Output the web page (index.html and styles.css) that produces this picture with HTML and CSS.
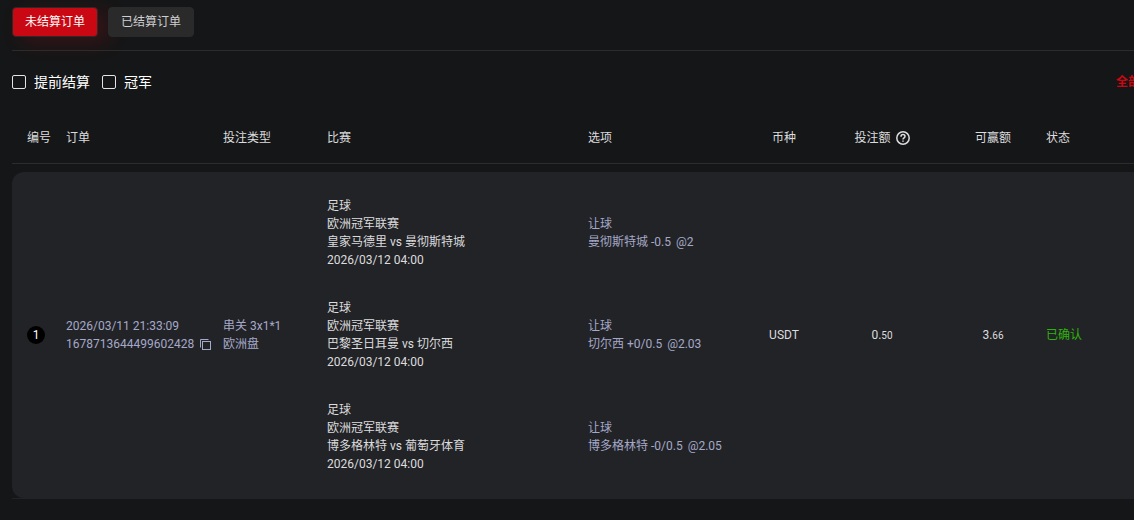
FILE: index.html
```html
<!DOCTYPE html>
<html lang="zh-CN">
<head>
  <meta charset="UTF-8">
  <meta name="viewport" content="width=device-width, initial-scale=1">
  <title>订单</title>
  <link rel="stylesheet" href="styles.css">
</head>
<body>
  <main class="page">
    <nav class="tabs">
      <button type="button" class="tab active">未结算订单</button>
      <button type="button" class="tab">已结算订单</button>
    </nav>

    <div class="filters">
      <label class="check"><input type="checkbox"> 提前结算</label>
      <label class="check"><input type="checkbox"> 冠军</label>
      <a href="#" class="all">全部</a>
    </div>

    <div class="orders-wrap">
      <table class="orders">
        <colgroup>
          <col class="col-no">
          <col class="col-order">
          <col class="col-type">
          <col class="col-match">
          <col class="col-pick">
          <col class="col-currency">
          <col class="col-stake">
          <col class="col-win">
          <col class="col-status">
        </colgroup>
        <thead>
          <tr>
            <th>编号</th>
            <th>订单</th>
            <th>投注类型</th>
            <th>比赛</th>
            <th>选项</th>
            <th class="center">币种</th>
            <th class="center">
              <span class="with-icon">投注额
                <svg class="help" viewBox="0 0 14 14" aria-hidden="true">
                  <circle cx="7" cy="7" r="6.2"/>
                  <path d="M5 5.7C5 4.4 5.8 3.6 7 3.6s2 .8 2 1.9C9 6.8 7 6.9 7 8.5M7 9.5v1.3"/>
                </svg>
              </span>
            </th>
            <th class="center">可赢额</th>
            <th>状态</th>
          </tr>
        </thead>
        <tbody>
          <tr>
            <td><span class="badge">1</span></td>
            <td class="muted">
              <div>2026/03/11 21:33:09</div>
              <div class="with-icon">1678713644499602428
                <button type="button" class="copy" aria-label="复制">
                  <svg viewBox="0 0 12 12" aria-hidden="true">
                    <path d="M1.5 9.5v-8h8"/>
                    <rect x="3.5" y="3.5" width="8" height="8"/>
                  </svg>
                </button>
              </div>
            </td>
            <td class="muted">
              <div>串关 3x1*1</div>
              <div>欧洲盘</div>
            </td>
            <td>
              <div class="leg">
                <div>足球</div>
                <div>欧洲冠军联赛</div>
                <div>皇家马德里 vs 曼彻斯特城</div>
                <div>2026/03/12 04:00</div>
              </div>
              <div class="leg">
                <div>足球</div>
                <div>欧洲冠军联赛</div>
                <div>巴黎圣日耳曼 vs 切尔西</div>
                <div>2026/03/12 04:00</div>
              </div>
              <div class="leg">
                <div>足球</div>
                <div>欧洲冠军联赛</div>
                <div>博多格林特 vs 葡萄牙体育</div>
                <div>2026/03/12 04:00</div>
              </div>
            </td>
            <td class="muted">
              <div class="leg">
                <div>让球</div>
                <div class="pick"><span>曼彻斯特城 -0.5</span><span>@2</span></div>
              </div>
              <div class="leg">
                <div>让球</div>
                <div class="pick"><span>切尔西 +0/0.5</span><span>@2.03</span></div>
              </div>
              <div class="leg">
                <div>让球</div>
                <div class="pick"><span>博多格林特 -0/0.5</span><span>@2.05</span></div>
              </div>
            </td>
            <td class="center">USDT</td>
            <td class="center">0.<small>50</small></td>
            <td class="center">3.<small>66</small></td>
            <td class="confirmed">已确认</td>
          </tr>
        </tbody>
      </table>
    </div>
  </main>
</body>
</html>
```
FILE: styles.css
```css
:root {
  --bg: #151617;
  --card: #222326;
  --line: #2b2c2e;
  --text: #dcdcde;
  --muted: #a5a9c9;
  --red: #c90813;
  --green: #2fb40c;
}

* {
  box-sizing: border-box;
}

body {
  margin: 0;
  background: var(--bg);
  color: var(--text);
  font-family: Roboto, "Noto Sans CJK SC", sans-serif;
  font-size: 12px;
  line-height: 18px;
  overflow-x: hidden;
}

button {
  font: inherit;
  cursor: pointer;
}

/* the list runs past the right side of the window */
.page {
  margin-right: -24px;
  padding: 7px 0 20px 12px;
}

.tabs {
  display: flex;
  gap: 10px;
  padding-bottom: 13px;
  border-bottom: 1px solid var(--line);
}

.tab {
  height: 30px;
  padding: 0 12px;
  border: 1px solid #2a2a2a;
  border-radius: 4px;
  background: #2a2a2a;
  color: #cfcfd2;
}

.tab.active {
  background: var(--red);
  color: #fff;
  box-shadow: 10px 5px 20px rgba(201, 8, 19, 0.2);
}

.filters {
  display: flex;
  align-items: center;
  gap: 12px;
  padding: 21px 18px 22px 0;
}

.check {
  display: flex;
  align-items: center;
  gap: 8px;
  color: #fff;
  font-size: 14px;
  line-height: 20px;
}

.check input {
  appearance: none;
  width: 14px;
  height: 14px;
  margin: 0;
  border: 1px solid #e4e4e4;
  border-radius: 2px;
}

.check input:checked {
  background: var(--red);
}

.all {
  margin-left: auto;
  color: var(--red);
  font-weight: 700;
  text-decoration: none;
}

.orders-wrap {
  border-bottom: 1px solid var(--card);
}

.orders {
  width: 100%;
  table-layout: fixed;
  border-spacing: 0;
}

.col-no { width: 46px; }
.col-order { width: 157px; }
.col-type { width: 104px; }
.col-match { width: 261px; }
.col-pick { width: 172px; }
.col-currency { width: 64px; }
.col-stake { width: 132px; }
.col-win { width: 90px; }

.orders th,
.orders td {
  padding: 0 0 0 8px;
  text-align: left;
  white-space: nowrap;
}

.orders th:first-child,
.orders td:first-child {
  padding-left: 15px;
}

.orders .center {
  padding-left: 0;
  text-align: center;
}

.orders th {
  height: 50px;
  padding-bottom: 2px;
  border-bottom: 1px solid var(--line);
  font-weight: 400;
}

/* gap between the header and the first card */
.orders tbody::before {
  content: "";
  display: block;
  height: 8px;
}

.orders td {
  padding-top: 10px;
  padding-bottom: 10px;
  background: var(--card);
}

.orders td:first-child {
  border-radius: 12px 0 0 12px;
}

.orders td:last-child {
  border-radius: 0 12px 12px 0;
}

.orders .muted {
  color: var(--muted);
}

.orders .confirmed {
  color: var(--green);
}

.orders small {
  font-size: 10px;
}

.badge {
  display: block;
  width: 18px;
  height: 18px;
  border-radius: 50%;
  background: #000;
  color: #fff;
  text-align: center;
}

.with-icon {
  display: inline-flex;
  align-items: center;
  gap: 5px;
}

.help {
  width: 14px;
  height: 14px;
  fill: none;
  stroke: currentColor;
  stroke-width: 1.5;
}

.copy {
  display: flex;
  padding: 0;
  border: 0;
  background: none;
  color: inherit;
}

.copy svg {
  width: 12px;
  height: 12px;
  fill: none;
  stroke: currentColor;
}

.leg {
  display: flex;
  flex-direction: column;
  justify-content: center;
  height: 102px;
}

.pick {
  display: flex;
  gap: 5px;
}
```
